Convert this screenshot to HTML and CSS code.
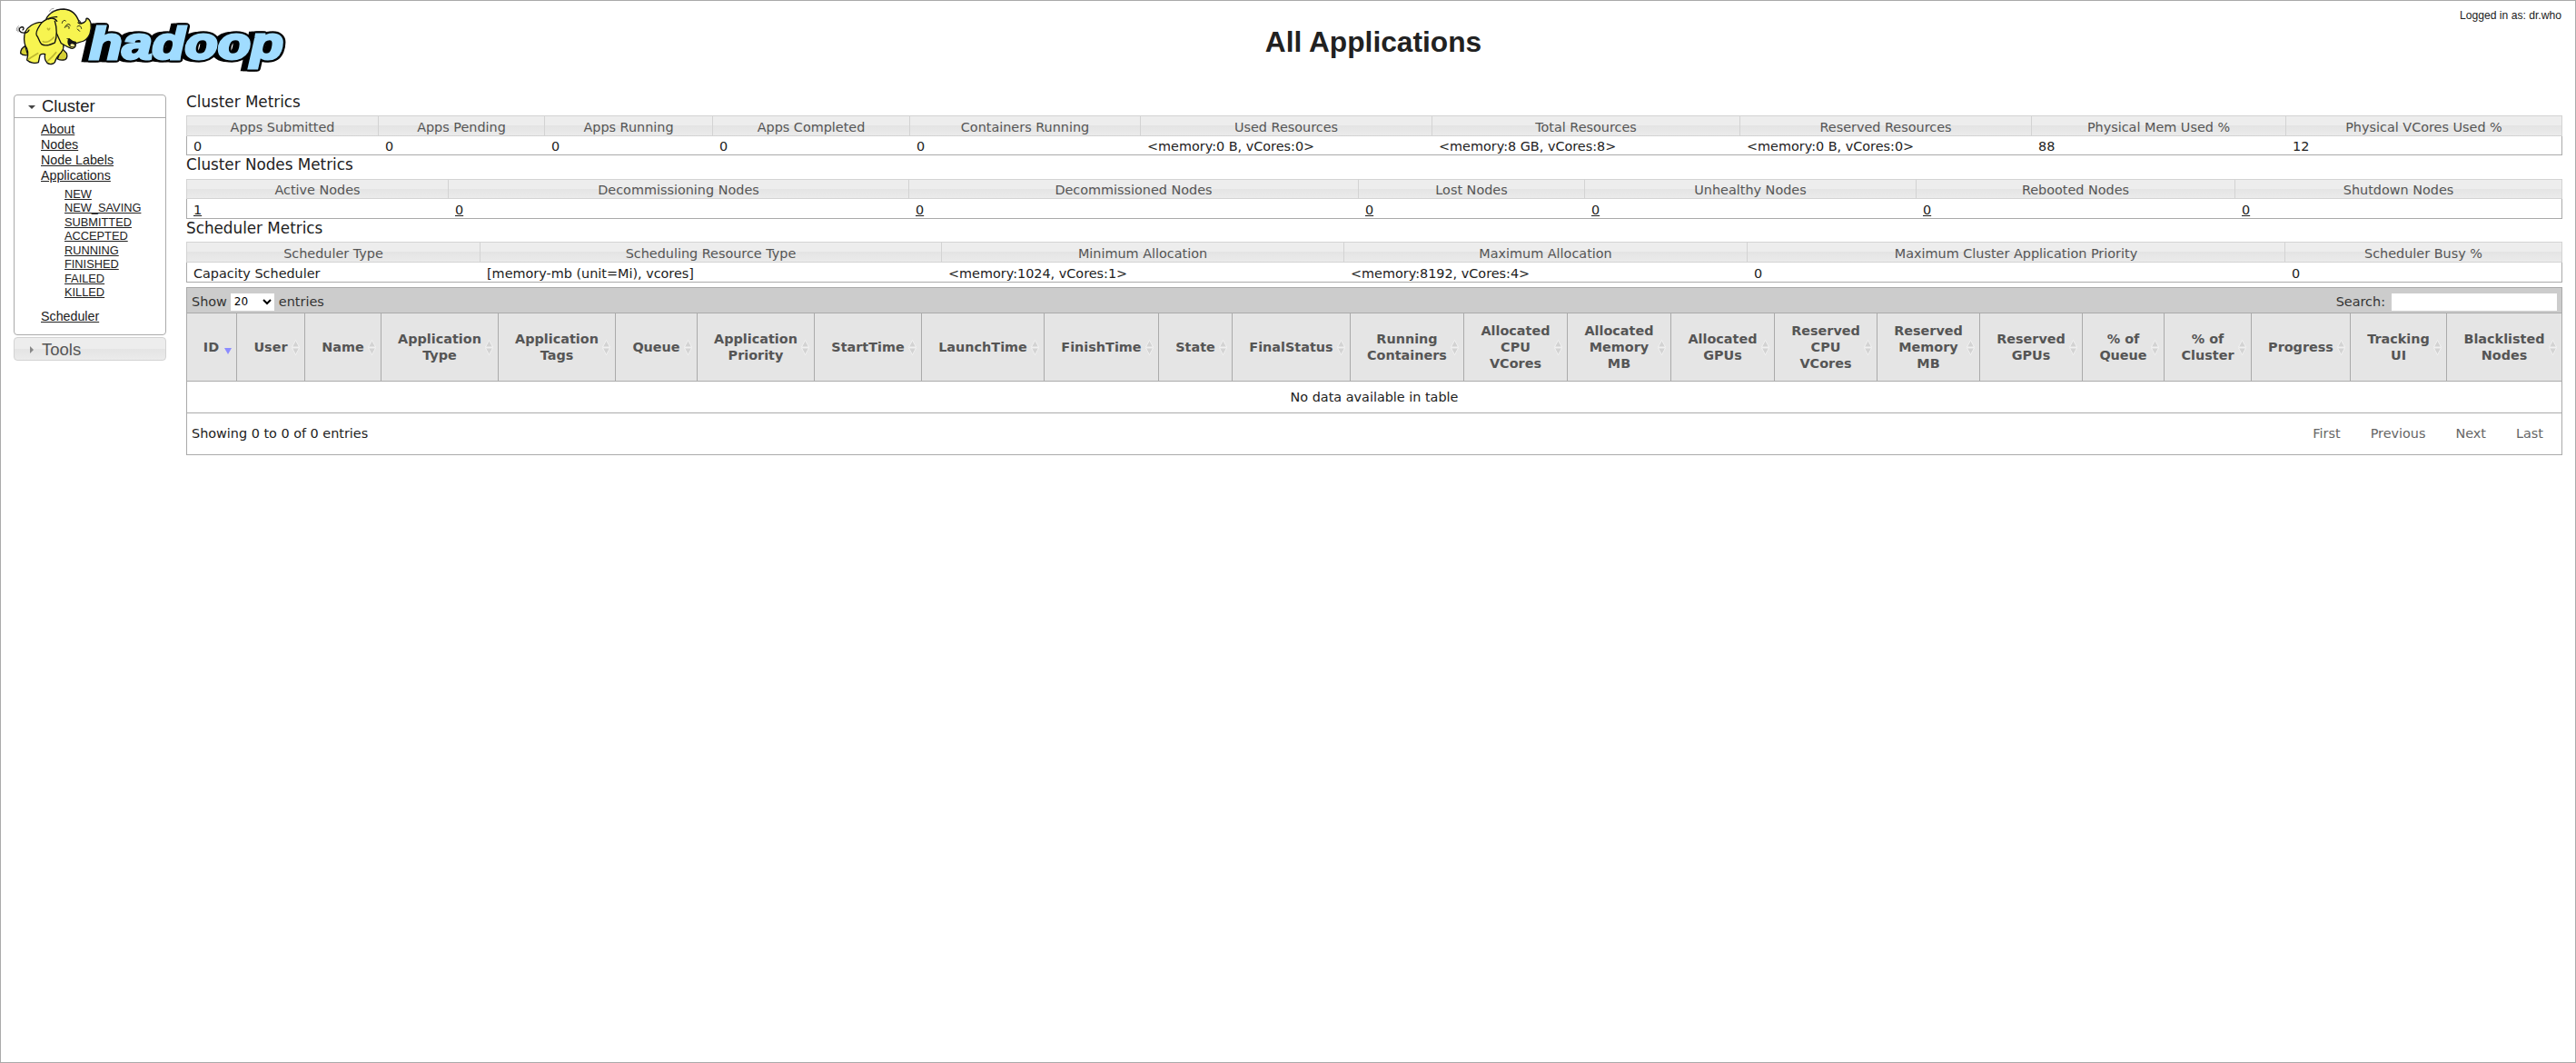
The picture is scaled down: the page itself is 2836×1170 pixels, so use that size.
FILE: index.html
```html
<!DOCTYPE html>
<html lang="en">
<head>
<meta charset="utf-8">
<title>All Applications</title>
<link rel="stylesheet" href="styles.css">
</head>
<body>
<svg class="sprites" aria-hidden="true">
  <symbol id="sort" viewBox="0 0 9 17">
    <path d="M4.500 .5L8.500 8H.5zM.5 9H8.500L4.500 16.500z" fill="#d3d3d3" stroke="#f6f6f6" stroke-width=".8"/>
  </symbol>
</svg>
<div class="page">
  <header class="header">
    <svg class="logo" viewBox="3 3 1020 300" role="img" aria-label="hadoop">
      <g class="wordmark">
        <text class="wm-shadow" x="280" y="196" textLength="641" lengthAdjust="spacingAndGlyphs">hadoop</text>
        <text class="wm-shadow" x="287" y="196" textLength="641" lengthAdjust="spacingAndGlyphs">hadoop</text>
        <text class="wm-edge" x="295" y="196" textLength="641" lengthAdjust="spacingAndGlyphs">hadoop</text>
        <text class="wm-face" x="295" y="196" textLength="641" lengthAdjust="spacingAndGlyphs">hadoop</text>
      </g>
      <g fill="#f7f450" stroke="#111" stroke-width="4" stroke-linejoin="round" stroke-linecap="round">
        <path d="M83 152C72 158 68 168 68 176C74 182 84 183 92 182zM203 158L220 176C223 186 220 194 215 197C205 200 196 198 190 195z" fill="#d5cf35"/>
        <path d="M139 73C110 74 90 90 83 106C77 125 80 140 84 152C94 164 94 180 89 198C98 208 118 210 127 206L132 182C138 176 143 178 149 179C146 190 149 200 156 208C165 214 176 212 181 206C184 193 193 182 202 173C210 163 212 152 207 142L190 70z"/>
        <path d="M150 74C152 50 178 30 211 30C240 32 255 52 262 75C275 80 286 70 285 61C291 60 297 67 300 77C304 100 296 126 277 135C264 141 253 139 249 145C252 155 241 164 231 158C219 154 210 147 202 143L186 108z"/>
        <path d="M188 56C168 54 139 68 132 83C122 98 118 111 121 117C128 124 128 135 137 146C151 155 168 147 181 141C189 121 188 91 181 70"/>
        <path d="M160 63C172 57 181 60 188 70M83 108C65 111 58 96 69 90C78 87 81 95 75 99M83 108C91 109 94 103 96 99" fill="none"/>
        <path d="M228 128C236 136 244 138 250 139C249 151 239 159 230 151C224 144 224 136 228 128z" fill="#161616"/>
        <path d="M232 149C236 142 244 145 247 150C241 156 235 154 232 149z" fill="#fff29a" stroke="none"/>
        <path d="M205 76C207 67 213 65 217 69M214 91C218 80 228 75 232 84M219 88C225 83 230 88 228 94M257 75L265 80M263 68L269 79M255 88C261 82 268 86 269 94M256 96L263 103M222 128L229 130" fill="none" stroke-width="3"/>
        <path d="M164 37C166 31 171 29 177 28M165 45C168 38 174 36 180 35M55 101C54 95 57 89 61 86M60 105C59 98 60 94 63 90" fill="none" stroke="#666" stroke-width="2"/>
        <path d="M164 94Q160 103 157 94M142 137C153 142 165 137 178 123M158 201C166 193 176 185 185 173M94 196C104 187 113 184 125 176" fill="none" stroke="#bdb62e" stroke-width="5"/>
      </g>
    </svg>
    <h1 class="title">All Applications</h1>
    <div class="user">Logged in as: dr.who</div>
  </header>
  <div class="columns">
    <nav class="nav">
      <section class="panel">
        <h3 class="panel-head"><span class="arrow-down"></span>Cluster</h3>
        <ul class="links">
          <li><a href="#">About</a></li>
          <li><a href="#">Nodes</a></li>
          <li><a href="#">Node Labels</a></li>
          <li><a href="#">Applications</a>
            <ul class="sublinks">
              <li><a href="#">NEW</a></li>
              <li><a href="#">NEW_SAVING</a></li>
              <li><a href="#">SUBMITTED</a></li>
              <li><a href="#">ACCEPTED</a></li>
              <li><a href="#">RUNNING</a></li>
              <li><a href="#">FINISHED</a></li>
              <li><a href="#">FAILED</a></li>
              <li><a href="#">KILLED</a></li>
            </ul>
          </li>
          <li><a href="#">Scheduler</a></li>
        </ul>
      </section>
      <h3 class="tools"><span class="arrow-right"></span>Tools</h3>
    </nav>
    <main class="content">
      <h3 class="heading">Cluster Metrics</h3>
      <div class="metrics cluster">
        <div class="mhead"><span>Apps Submitted</span><span>Apps Pending</span><span>Apps Running</span><span>Apps Completed</span><span>Containers Running</span><span>Used Resources</span><span>Total Resources</span><span>Reserved Resources</span><span>Physical Mem Used %</span><span>Physical VCores Used %</span></div>
        <div class="mrow"><span>0</span><span>0</span><span>0</span><span>0</span><span>0</span><span>&lt;memory:0 B, vCores:0&gt;</span><span>&lt;memory:8 GB, vCores:8&gt;</span><span>&lt;memory:0 B, vCores:0&gt;</span><span>88</span><span>12</span></div>
      </div>
      <h3 class="heading">Cluster Nodes Metrics</h3>
      <div class="metrics nodes">
        <div class="mhead"><span>Active Nodes</span><span>Decommissioning Nodes</span><span>Decommissioned Nodes</span><span>Lost Nodes</span><span>Unhealthy Nodes</span><span>Rebooted Nodes</span><span>Shutdown Nodes</span></div>
        <div class="mrow"><a href="#">1</a><a href="#">0</a><a href="#">0</a><a href="#">0</a><a href="#">0</a><a href="#">0</a><a href="#">0</a></div>
      </div>
      <h3 class="heading">Scheduler Metrics</h3>
      <div class="metrics scheduler">
        <div class="mhead"><span>Scheduler Type</span><span>Scheduling Resource Type</span><span>Minimum Allocation</span><span>Maximum Allocation</span><span>Maximum Cluster Application Priority</span><span>Scheduler Busy %</span></div>
        <div class="mrow"><span>Capacity Scheduler</span><span>[memory-mb (unit=Mi), vcores]</span><span>&lt;memory:1024, vCores:1&gt;</span><span>&lt;memory:8192, vCores:4&gt;</span><span>0</span><span>0</span></div>
      </div>
      <div class="apps">
        <div class="toolbar">
          <label class="length">Show <select class="select"><option>20</option></select> entries</label>
          <label class="filter">Search: <input class="search" type="text"></label>
        </div>
        <div class="ahead">
          <div class="sorted"><span>ID</span><i class="desc"></i></div>
          <div><span>User</span><svg><use href="#sort"/></svg></div>
          <div><span>Name</span><svg><use href="#sort"/></svg></div>
          <div><span>Application<br>Type</span><svg><use href="#sort"/></svg></div>
          <div><span>Application<br>Tags</span><svg><use href="#sort"/></svg></div>
          <div><span>Queue</span><svg><use href="#sort"/></svg></div>
          <div><span>Application<br>Priority</span><svg><use href="#sort"/></svg></div>
          <div><span>StartTime</span><svg><use href="#sort"/></svg></div>
          <div><span>LaunchTime</span><svg><use href="#sort"/></svg></div>
          <div><span>FinishTime</span><svg><use href="#sort"/></svg></div>
          <div><span>State</span><svg><use href="#sort"/></svg></div>
          <div><span>FinalStatus</span><svg><use href="#sort"/></svg></div>
          <div><span>Running<br>Containers</span><svg><use href="#sort"/></svg></div>
          <div><span>Allocated<br>CPU<br>VCores</span><svg><use href="#sort"/></svg></div>
          <div><span>Allocated<br>Memory<br>MB</span><svg><use href="#sort"/></svg></div>
          <div><span>Allocated<br>GPUs</span><svg><use href="#sort"/></svg></div>
          <div><span>Reserved<br>CPU<br>VCores</span><svg><use href="#sort"/></svg></div>
          <div><span>Reserved<br>Memory<br>MB</span><svg><use href="#sort"/></svg></div>
          <div><span>Reserved<br>GPUs</span><svg><use href="#sort"/></svg></div>
          <div><span>% of<br>Queue</span><svg><use href="#sort"/></svg></div>
          <div><span>% of<br>Cluster</span><svg><use href="#sort"/></svg></div>
          <div><span>Progress</span><svg><use href="#sort"/></svg></div>
          <div><span>Tracking<br>UI</span><svg><use href="#sort"/></svg></div>
          <div><span>Blacklisted<br>Nodes</span><svg><use href="#sort"/></svg></div>
        </div>
        <div class="empty">No data available in table</div>
        <div class="footer">
          <span>Showing 0 to 0 of 0 entries</span>
          <div class="pager"><span>First</span><span>Previous</span><span>Next</span><span>Last</span></div>
        </div>
      </div>
    </main>
  </div>
</div>
</body>
</html>
```
FILE: styles.css
```css
* { box-sizing: border-box; }
body {
  margin: 0;
  background: #fff;
  color: #212121;
  font: 14.4px "DejaVu Sans", sans-serif;
}
a { color: inherit; }
h1, h3, ul { margin: 0; padding: 0; font-weight: normal; }
ul { list-style: none; }
.sprites { display: none; }
.page {
  height: 1170px;
  border: 1px solid #aaa;
}

/* Header */
.header {
  display: grid;
  grid-template-columns: 204px 1fr;
  height: 101px;
  position: relative;
  font-family: "Liberation Sans", Arial, sans-serif;
}
.logo { width: 340px; height: 100px; }
.wordmark {
  font: italic bold 148px "Liberation Sans", Arial, sans-serif;
}
.wm-shadow { fill: #000; stroke: #000; stroke-width: 20px; }
.wm-edge { fill: #000; stroke: #000; stroke-width: 22px; stroke-linejoin: round; }
.wm-face { fill: #a0dcff; stroke: #a0dcff; stroke-width: 9px; }
.title {
  padding-top: 26px;
  margin-right: 16px;
  text-align: center;
  font-size: 31.7px;
  line-height: 38px;
  font-weight: bold;
}
.user {
  position: absolute;
  top: 9px;
  right: 15px;
  font-size: 12.15px;
  line-height: 14px;
}

.columns { display: flex; }

/* Side navigation */
.nav {
  width: 168px;
  margin: 2px 22px 0 14px;
  font-family: "Liberation Sans", Arial, sans-serif;
}
.panel {
  height: 265px;
  border: 1px solid #aaa;
  border-radius: 4px;
}
.panel-head, .tools {
  display: flex;
  align-items: center;
  font-size: 18.5px;
  line-height: 24px;
}
.panel-head {
  height: 25px;
  border-bottom: 1px solid #aaa;
}
.tools {
  height: 26px;
  margin-top: 2px;
  padding-top: 1px;
  border: 1px solid #d3d3d3;
  border-radius: 4px;
  color: #555;
  background: linear-gradient(#ededed 0 48%, #e4e4e4 50%, #ebebeb);
}
.arrow-down {
  margin: 1px 7px 0 15px;
  border: 4px solid transparent;
  border-top-color: #454545;
  border-bottom: 0;
}
.arrow-right {
  margin: 0 9px 0 17px;
  border: 4px solid transparent;
  border-left-color: #888;
  border-right: 0;
}
.links {
  padding: 4px 0 0 29px;
  font-size: 14.25px;
  line-height: 17px;
}
.sublinks {
  margin: 4px 0 10px 26px;
  font-size: 12.8px;
  line-height: 15.43px;
}

/* Metrics */
.content {
  width: 2616px;
}
.heading {
  height: 25px;
  font-size: 16.8px;
  line-height: 20px;
}
.mhead, .mrow {
  display: grid;
  line-height: 18px;
}
.mhead {
  height: 23px;
  border: 1px solid #d3d3d3;
  border-left: 0;
  color: #555;
  text-align: center;
  background: linear-gradient(#ededed 0 48%, #e4e4e4 50%, #ebebeb);
}
.mhead > * {
  padding-top: 3px;
  border-left: 1px solid #d3d3d3;
}
.mrow {
  height: 21px;
  border: 1px solid #aaa;
  border-top: 0;
  border-left: 0;
}
.mrow > * { padding: 2px 0 0 8px; }
.mrow > :first-child { border-left: 1px solid #aaa; padding-left: 7px; }
.cluster > div { grid-template-columns: 211px 183px 185px 217px 254px 321px 339px 321px 280px 1fr; }
.nodes > div { grid-template-columns: 288px 507px 495px 249px 365px 351px 1fr; }
.scheduler > div { grid-template-columns: 323px 508px 443px 444px 592px 1fr; }
.cluster + .heading { height: 26px; }
.nodes .mhead { height: 22px; }
.nodes .mhead > * { padding-top: 2px; }
.nodes .mrow, .scheduler .mrow { height: 22px; }
.nodes .mrow > * { padding-top: 3px; }
.scheduler .mrow > * { padding-top: 3px; }

/* Applications table */
.apps {
  margin-top: 5px;
  border: 1px solid #aaa;
}
.toolbar {
  display: flex;
  justify-content: space-between;
  align-items: center;
  height: 27px;
  padding: 3px 5px 0;
  color: #333;
  background: #ccc;
}
.length, .filter { display: flex; align-items: center; }
.length { gap: 5px; }
.filter { gap: 7px; }
.select {
  width: 48px;
  height: 19px;
  margin-left: -1px;
  border: 0;
  padding: 0;
  border-radius: 0;
  background-color: #fff;
  color: #000;
  font: 12px "DejaVu Sans", sans-serif;
}
.search {
  width: 182px;
  height: 19px;
  border: 0;
  padding: 0;
  background: #fff;
}
.ahead {
  display: grid;
  grid-template-columns: 54px 75px 84px 129px 129px 90px 129px 118px 135px 126px 81px 130px 125px 114px 114px 114px 113px 113px 113px 90px 96px 109px 106px 1fr;
  height: 76px;
  border: solid #aaa;
  border-width: 1px 0;
  color: #555;
  background: #e5e5e5;
  font-weight: bold;
  line-height: 18px;
  text-align: center;
}
.ahead > div {
  display: grid;
  align-content: center;
  justify-content: center;
  position: relative;
  border-left: 1px solid #aaa;
}
.ahead > .sorted { border-left: 0; padding-right: 1px; }
.ahead svg {
  position: absolute;
  right: 5px;
  top: 29px;
  width: 9px;
  height: 17px;
}
.desc {
  position: absolute;
  right: 5px;
  top: 38px;
  border: 4px solid transparent;
  border-top: 7px solid #8c8cff;
  border-bottom: 0;
}
.empty {
  height: 35px;
  border-bottom: 1px solid #aaa;
  line-height: 34px;
  text-align: center;
}
.footer {
  display: flex;
  justify-content: space-between;
  height: 45px;
  padding: 0 20px 0 5px;
  line-height: 44px;
}
.pager {
  display: flex;
  gap: 33px;
  color: #666;
}
```
